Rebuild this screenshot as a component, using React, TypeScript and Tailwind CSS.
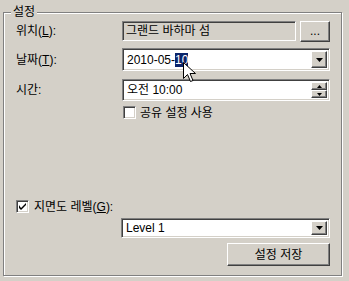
import React from "react";

const sunken =
  "border border-t-[#808080] border-l-[#808080] border-b-white border-r-white shadow-[inset_1px_1px_0_#404040,inset_-1px_-1px_0_#D4D0C8]";
const raised =
  "border border-t-white border-l-white border-b-[#404040] border-r-[#404040] shadow-[inset_-1px_-1px_0_#808080] bg-[#D4D0C8]";

function DownArrow() {
  return (
    <svg width="7" height="4" viewBox="0 0 7 4">
      <path d="M0 0h7L3.5 4z" fill="#000" />
    </svg>
  );
}

function DropButton() {
  return (
    <div className={`${raised} w-[16px] h-full flex items-center justify-center`}>
      <DownArrow />
    </div>
  );
}

function CheckBox(props: { checked?: boolean }) {
  return (
    <div className={`${sunken} w-[13px] h-[13px] bg-white flex items-center justify-center shrink-0`}>
      {props.checked && (
        <svg width="7" height="7" viewBox="0 0 7 7">
          <path d="M0 2v3l2 2 5-5V0L2 5z" fill="#000" />
        </svg>
      )}
    </div>
  );
}

function Cursor() {
  return (
    <svg className="absolute left-[60px] top-[13px]" width="13" height="21" viewBox="0 0 13 21">
      <path
        d="M0.5 0.5v16l4-4 3 7 2.5-1-3-7h5.5z"
        fill="#fff"
        stroke="#000"
        strokeWidth="1"
        strokeLinejoin="miter"
      />
    </svg>
  );
}

export default function App() {
  return (
    <div className="w-[349px] h-[281px] bg-[#D4D0C8] pt-[12px] pl-[3px] overflow-hidden text-[12px] text-black font-['Liberation_Sans','Noto_Sans_CJK_KR',sans-serif]">
      <div className="relative w-[339px] h-[264px] border border-[#808080] shadow-[inset_1px_1px_0_#fff,1px_1px_0_#fff] flex flex-col pl-[12px]">
        <span className="absolute left-[7px] top-[-9px] bg-[#D4D0C8] px-[2px] leading-[16px]">설정</span>

        {/* 위치 */}
        <div className="mt-[8px] flex items-start h-[21px]">
          <div className="w-[106px] h-[20px] flex items-center">
            위치(<u>L</u>):
          </div>
          <div className={`${sunken} w-[174px] h-[20px] flex items-center pl-[3px]`}>그랜드 바하마 섬</div>
          <button className={`${raised} ml-[4px] w-[30px] h-[21px] flex items-center justify-center pb-[2px]`}>...</button>
        </div>

        {/* 날짜 */}
        <div className="mt-[6px] flex items-center h-[23px]">
          <div className="w-[106px]">
            날짜(<u>T</u>):
          </div>
          <div className={`${sunken} relative w-[208px] h-[23px] bg-white flex items-center p-[2px]`}>
            <div className="flex-1 pl-[2px] flex items-center">
              2010-05-<span className="bg-[#0A246A] text-white leading-[14px]">10</span>
            </div>
            <DropButton />
            <Cursor />
          </div>
        </div>

        {/* 시간 */}
        <div className="mt-[8px] flex items-center h-[22px]">
          <div className="w-[106px]">시간:</div>
          <div className={`${sunken} w-[208px] h-[22px] bg-white flex items-center p-[2px]`}>
            <div className="flex-1 pl-[2px]">오전 10:00</div>
            <div className="w-[16px] h-full flex flex-col">
              <div className={`${raised} flex-1 flex items-center justify-center`}>
                <svg width="5" height="3" viewBox="0 0 5 3">
                  <path d="M0 3h5L2.5 0z" fill="#000" />
                </svg>
              </div>
              <div className={`${raised} flex-1 flex items-center justify-center`}>
                <svg width="5" height="3" viewBox="0 0 5 3">
                  <path d="M0 0h5L2.5 3z" fill="#000" />
                </svg>
              </div>
            </div>
          </div>
        </div>

        {/* 공유 설정 사용 */}
        <div className="mt-[5px] ml-[107px] flex items-center gap-[4px] h-[13px]">
          <CheckBox />
          <span>공유 설정 사용</span>
        </div>

        {/* 지면도 레벨 */}
        <div className="mt-[81px] flex items-center gap-[5px] h-[13px]">
          <CheckBox checked />
          <span>
            지면도 레벨(<u>G</u>):
          </span>
        </div>

        <div className="mt-[5px] ml-[105px] w-[209px] h-[20px]">
          <div className={`${sunken} w-full h-full bg-white flex items-center p-[2px]`}>
            <div className="flex-1 pl-[2px]">Level 1</div>
            <DropButton />
          </div>
        </div>

        <div className="mt-[5px] flex">
          <button className={`${raised} ml-[211px] w-[103px] h-[23px] flex items-center justify-center`}>설정 저장</button>
        </div>
      </div>
    </div>
  );
}
